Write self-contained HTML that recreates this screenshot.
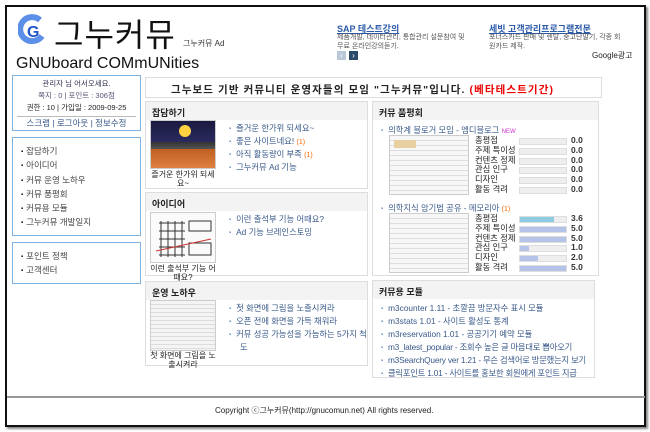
<!DOCTYPE html>
<html><head><meta charset="utf-8"><style>
*{margin:0;padding:0;box-sizing:border-box}
body{width:650px;height:432px;background:#fff;position:relative;overflow:hidden;font-family:"Liberation Sans","Noto Sans CJK KR","NanumGothic",sans-serif;font-size:9px;color:#333}
.a{position:absolute;white-space:nowrap}
.frame{position:absolute;left:5px;top:5px;width:641px;height:422px;border:2px solid #111;box-shadow:2px 2px 2px #888}
.lb{position:absolute;left:12px;width:129px;border:1px solid #7fb2e0;background:#fff}
.box{position:absolute;border:1px solid #ddd;background:#fff}
.hd{height:18px;background:#f3f3f3;font-weight:bold;font-size:9px;color:#222;padding:4px 0 0 6px}
.li{position:absolute;font-size:8.3px;color:#3a5a8a;white-space:nowrap}
.li:before{content:"▪";color:#6b8fc0;font-size:6px;margin-right:5px;vertical-align:1px}
.mi{position:absolute;left:8px;font-size:8.5px;color:#444}
.mi:before{content:"▪";color:#000;font-size:6px;margin-right:3px;vertical-align:1px}
.cap{position:absolute;font-size:8px;color:#222;text-align:center;line-height:9px}
.thumb{position:absolute;border:1px solid #ccc}
.r{position:absolute;font-size:8.3px;color:#222}
.bar{position:absolute;height:7px;background:#eee;border:1px solid #ddd;width:48px}
.bar i{display:block;height:100%;background:#b5c3e8}
.v{position:absolute;font-size:8.5px;font-weight:bold;color:#333}
.n{color:#f60;font-size:7px}
</style></head><body>
<div class="frame"></div>
<svg class="a" style="left:18px;top:14px" width="28" height="32" viewBox="0 0 28 32"><path d="M22 6 A12 12 0 1 0 24 22" fill="none" stroke="#5b8fe8" stroke-width="6"/><text x="9" y="23" font-size="16" font-weight="bold" fill="#2255cc" font-family="Liberation Sans">G</text></svg>
<div class="a" style="left:54px;top:10px;font-size:32px;color:#111;letter-spacing:1px">그누커뮤</div>
<div class="a" style="left:183px;top:38px;font-size:8px;color:#333">그누커뮤 Ad</div>
<div class="a" style="left:16px;top:55px;font-size:16px;color:#111">GNUboard COMmUNities</div>
<div class="a" style="left:337px;top:22px;font-size:9px;font-weight:bold;color:#2a5aa8;text-decoration:underline">SAP 테스트강의</div>
<div class="a" style="left:337px;top:33px;font-size:7px;color:#555;line-height:9px">제품개발, 데이터관리, 통합관리 설문참여 및<br>무료 온라인강의듣기.</div>
<div class="a" style="left:489px;top:22px;font-size:9px;font-weight:bold;color:#2a5aa8;text-decoration:underline">세빗 고객관리프로그램전문</div>
<div class="a" style="left:489px;top:33px;font-size:7px;color:#555;line-height:9px">포너스카드 판매 및 렌탈, 중고단말기, 각종 회<br>원카드 제작.</div>
<div class="a" style="left:337px;top:51px;width:9px;height:9px;background:#b8c8d8;color:#fff;font-size:8px;text-align:center;line-height:9px">‹</div>
<div class="a" style="left:349px;top:51px;width:9px;height:9px;background:#2a4a6a;color:#fff;font-size:8px;text-align:center;line-height:9px">›</div>
<div class="a" style="left:592px;top:50px;font-size:8px;color:#222">Google광고</div>

<div class="lb" style="top:75px;height:56px;text-align:center;font-size:7.5px;line-height:12px;padding-top:2px">
<div style="color:#335">관리자 님 어서오세요.</div>
<div style="color:#557">쪽지 : 0 | 포인트 : 306점</div>
<div style="color:#222">권한 : 10 | 가입일 : 2009-09-25</div>
<div style="border-top:1px solid #bbb;margin:2px 4px 0;color:#3a5a8a;font-size:8.5px">스크랩 | 로그아웃 | 정보수정</div>
</div>
<div class="lb" style="top:137px;height:99px">
<div class="mi" style="top:7px">잡담하기</div><div class="mi" style="top:21px">아이디어</div><div class="mi" style="top:36px">커뮤 운영 노하우</div><div class="mi" style="top:50px">커뮤 품평회</div><div class="mi" style="top:64px">커뮤용 모듈</div><div class="mi" style="top:78px">그누커뮤 개발일지</div>
</div>
<div class="lb" style="top:242px;height:42px">
<div class="mi" style="top:7px">포인트 정책</div><div class="mi" style="top:21px">고객센터</div>
</div>

<div class="box" style="left:145px;top:77px;width:457px;height:21px;border-color:#ddd"><div class="a" style="left:25px;top:4px;font-size:10.5px;font-weight:bold;color:#222;letter-spacing:1.1px">그누보드 기반 커뮤니티 운영자들의 모임 "그누커뮤"입니다. <span style="color:#e00">(베타테스트기간)</span></div></div>

<div class="box" style="left:145px;top:101px;width:223px;height:88px"><div class="hd">잡담하기</div>
<div class="thumb" style="left:4px;top:18px;width:66px;height:49px;background:linear-gradient(#1a1a40 0,#2a2a60 45%,#333 45%,#555 60%,#c06020 60%,#e08040 100%)"><div style="position:absolute;left:28px;top:4px;width:12px;height:12px;border-radius:6px;background:#ffd040"></div></div>
<div class="cap" style="left:2px;top:68px;width:70px">즐거운 한가위 되세<br>요~</div>
<div class="li" style="left:83px;top:20px">즐거운 한가위 되세요~</div>
<div class="li" style="left:83px;top:33px">좋은 사이트네요! <span class="n">(1)</span></div>
<div class="li" style="left:83px;top:46px">아직 활동량이 부족 <span class="n">(1)</span></div>
<div class="li" style="left:83px;top:59px">그누커뮤 Ad 기능</div>
</div>
<div class="box" style="left:145px;top:192px;width:223px;height:84px"><div class="hd">아이디어</div>
<div class="thumb" style="left:4px;top:19px;width:66px;height:51px;background:#fafafa"><svg width="64" height="49"><g stroke="#333" stroke-width="1" fill="none"><path d="M8 10h26M8 18h26M8 26h26M8 34h26M8 42h26M10 8v36M17 8v36M24 8v36M31 8v36"/><rect x="38" y="8" width="22" height="10"/><rect x="38" y="30" width="22" height="12"/></g><path d="M5 38L60 26" stroke="#c33"/></svg></div>
<div class="cap" style="left:2px;top:71px;width:70px">이런 출석부 기능 어<br>때요?</div>
<div class="li" style="left:83px;top:20px">이런 출석부 기능 어때요?</div>
<div class="li" style="left:83px;top:33px">Ad 기능 브레인스토밍</div>
</div>
<div class="box" style="left:145px;top:281px;width:223px;height:85px"><div class="hd">운영 노하우</div>
<div class="thumb" style="left:4px;top:18px;width:66px;height:51px;background:repeating-linear-gradient(#f4f4f4 0 3px,#ddd 3px 4px)"></div>
<div class="cap" style="left:2px;top:69px;width:70px">첫 화면에 그림을 노<br>출시켜라</div>
<div class="li" style="left:83px;top:20px">첫 화면에 그림을 노출시켜라</div>
<div class="li" style="left:83px;top:33px">오픈 전에 화면을 가득 채워라</div>
<div class="li" style="left:83px;top:46px;line-height:12px">커뮤 성공 가능성을 가늠하는 5가지 척<br><span style="margin-left:11px">도</span></div>
</div>

<div class="box" style="left:372px;top:101px;width:227px;height:175px"><div class="hd">커뮤 품평회</div>
<div class="li" style="left:8px;top:22px">의학계 블로거 모임 - 엠디블로그 <span style="color:#c3c;font-size:6px">NEW</span></div>
<div class="thumb" style="left:16px;top:33px;width:80px;height:60px;background:repeating-linear-gradient(#f7f7f7 0 4px,#ddd 4px 5px)"><div style="margin:4px;width:22px;height:8px;background:#e8d0a0"></div></div>
<div class="r" style="left:102px;top:34px;line-height:9.8px">총평점<br>주제 특이성<br>컨텐츠 정제<br>관심 인구<br>디자인<br>활동 격려</div>
<div class="bar" style="left:146px;top:36px"></div><div class="bar" style="left:146px;top:46px"></div><div class="bar" style="left:146px;top:56px"></div><div class="bar" style="left:146px;top:65px"></div><div class="bar" style="left:146px;top:75px"></div><div class="bar" style="left:146px;top:85px"></div>
<div class="v" style="left:198px;top:34px;line-height:9.8px">0.0<br>0.0<br>0.0<br>0.0<br>0.0<br>0.0</div>
<div class="li" style="left:8px;top:100px">의학지식 암기법 공유 - 메모리아 <span class="n">(1)</span></div>
<div class="thumb" style="left:16px;top:111px;width:80px;height:60px;background:repeating-linear-gradient(#f7f7f7 0 4px,#ddd 4px 5px)"></div>
<div class="r" style="left:102px;top:112px;line-height:9.8px">총평점<br>주제 특이성<br>컨텐츠 정제<br>관심 인구<br>디자인<br>활동 격려</div>
<div class="bar" style="left:146px;top:114px"><i style="width:73%;background:#8ccbe0"></i></div><div class="bar" style="left:146px;top:124px"><i style="width:100%"></i></div><div class="bar" style="left:146px;top:134px"><i style="width:100%"></i></div><div class="bar" style="left:146px;top:143px"><i style="width:20%"></i></div><div class="bar" style="left:146px;top:153px"><i style="width:40%"></i></div><div class="bar" style="left:146px;top:163px"><i style="width:100%"></i></div>
<div class="v" style="left:198px;top:112px;line-height:9.8px">3.6<br>5.0<br>5.0<br>1.0<br>2.0<br>5.0</div>
</div>
<div class="box" style="left:372px;top:280px;width:223px;height:98px"><div class="hd">커뮤용 모듈</div>
<div class="li" style="left:8px;top:21px">m3counter 1.11 - 초깔끔 방문자수 표시 모듈</div>
<div class="li" style="left:8px;top:34px">m3stats 1.01 - 사이트 활성도 통계</div>
<div class="li" style="left:8px;top:47px">m3reservation 1.01 - 공공기기 예약 모듈</div>
<div class="li" style="left:8px;top:60px;letter-spacing:-0.2px">m3_latest_popular - 조회수 높은 글 마음대로 뽑아오기</div>
<div class="li" style="left:8px;top:73px;letter-spacing:-0.2px">m3SearchQuery ver 1.21 - 무슨 검색어로 방문했는지 보기</div>
<div class="li" style="left:8px;top:86px;letter-spacing:-0.2px">클릭포인트 1.01 - 사이트를 홍보한 회원에게 포인트 지급</div>
</div>

<div class="a" style="left:7px;top:396px;width:638px;height:2px;background:#999"></div>
<div class="a" style="left:215px;top:405px;font-size:8px;color:#222">Copyright ⓒ그누커뮤(http://gnucomun.net) All rights reserved.</div>
</body></html>
